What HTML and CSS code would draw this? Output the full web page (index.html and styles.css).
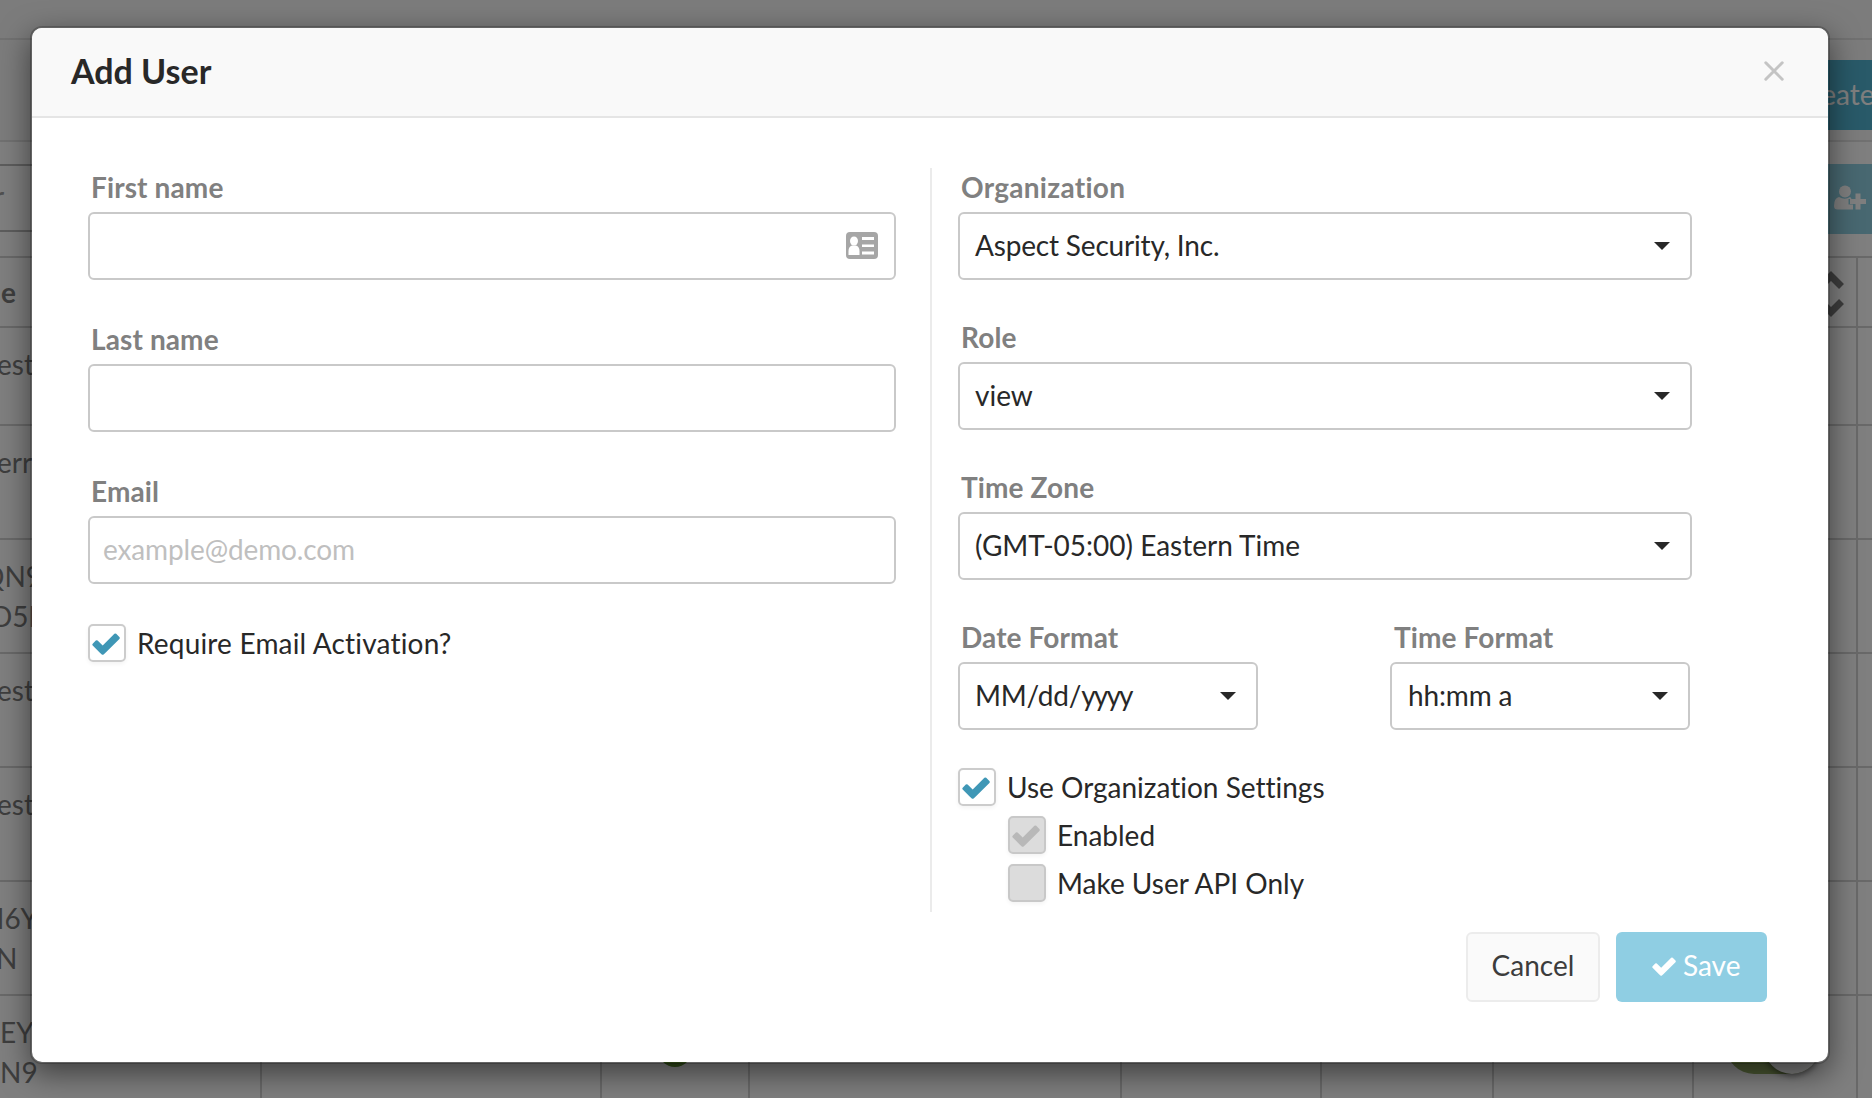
FILE: index.html
```html
<!DOCTYPE html>
<html lang="en">
<head>
<meta charset="utf-8">
<title>Add User</title>
<link rel="stylesheet" href="styles.css">
</head>
<body>
<svg class="defs" width="0" height="0">
  <symbol id="check" viewBox="0 0 28 22"><path d="M27.4 5.9 13.5 19.8 11.6 21.5Q10.7 22.1 9.8 21.5L7.9 19.8.7 12.5Q-.1 11.6.7 10.7L3.8 7.6Q4.7 6.8 5.6 7.6L10.7 12.6 22.4.8Q23.3 0 24.2.8L27.4 4Q28.2 4.9 27.4 5.9Z" fill="currentColor"/></symbol>
</svg>
<div class="page">
  <div class="topbar"></div>
  <div class="toolbar"><button class="create">Create</button></div>
  <div class="searchbar">
    <div class="search">r</div>
    <button class="add-user"><svg width="34" height="26" viewBox="0 0 34 26"><circle cx="12" cy="6.5" r="6"/><path d="M6 12Q1 13 1 21Q1 24.500 4.500 24.500H20V19.500H15.500V14H18.500Q18 12.300 17 12Q12 15.500 6 12Z"/><path d="M22.500 8.500h5v5.500h5.500v5h-5.500v5.500h-5v-5.500h-5.500v-5h5.500z"/></svg></button>
  </div>
  <div class="table">
    <div class="row head"><div class="name">e</div><i></i><i></i><i></i><i></i><i></i><i></i><i class="sort"><svg width="28" height="46" viewBox="0 0 28 46"><path d="M3.500 15.500 14 5 24.500 15.500M3.500 30.500 14 41 24.500 30.500" fill="none" stroke="currentColor" stroke-width="7"/></svg></i></div>
    <div class="row short"><div class="name n1">est</div><i></i><i></i><i></i><i></i><i></i><i></i><i></i></div>
    <div class="row"><div class="name n1">err</div><i></i><i></i><i></i><i></i><i></i><i></i><i></i></div>
    <div class="row"><div class="name"><span class="n2">QN9</span><span class="n3">D5H</span></div><i></i><i></i><i></i><i></i><i></i><i></i><i></i></div>
    <div class="row"><div class="name n1">est</div><i></i><i></i><i></i><i></i><i></i><i></i><i></i></div>
    <div class="row"><div class="name n1">est</div><i></i><i></i><i></i><i></i><i></i><i></i><i></i></div>
    <div class="row"><div class="name"><span class="n4">H6Y</span><span class="n5">N</span></div><i></i><i></i><i></i><i></i><i></i><i></i><i></i></div>
    <div class="row"><div class="name"><span class="n6">EY</span><span class="n7">N9</span></div><i></i><i class="status"><b class="dot"></b></i><i></i><i></i><i></i><i></i><i class="switch-cell"><b class="switch"><b class="knob"></b></b></i></div>
  </div>
</div>
<div class="backdrop">
  <div class="modal">
    <header class="modal-head">
      <h1>Add User</h1>
      <svg class="close" width="20" height="20" viewBox="0 0 20 20"><path d="M1.800 1.800 18.200 18.200M18.200 1.800 1.800 18.200" stroke="currentColor" stroke-width="3" stroke-linecap="round"/></svg>
    </header>
    <div class="columns">
      <div class="left">
        <div class="field"><label>First name</label><div class="box"><svg class="card" width="32" height="27" viewBox="0 0 32 27"><rect width="32" height="27" rx="4" fill="#a6a6a6"/><g fill="#fff"><ellipse cx="8" cy="9" rx="4" ry="4.500"/><path d="M2.500 23v-4q0-4.500 3.500-5.500h4q3.500 1 3.500 5.500v4z"/><path d="M16 5h12v3h-12zM16 12.500h12v2.500h-12zM16 19.500h12v3h-12z"/></g></svg></div></div>
        <div class="field"><label>Last name</label><div class="box"></div></div>
        <div class="field"><label>Email</label><div class="box hint">example@demo.com</div></div>
        <div class="option wide"><span class="tick"><svg width="28" height="22"><use href="#check"/></svg></span>Require Email Activation?</div>
      </div>
      <div class="right">
        <div class="field"><label class="org-label">Organization</label><div class="box select org">Aspect Security, Inc.</div></div>
        <div class="field"><label>Role</label><div class="box select">view</div></div>
        <div class="field"><label>Time Zone</label><div class="box select">(GMT-05:00) Eastern Time</div></div>
        <div class="pair">
          <div class="field"><label>Date Format</label><div class="box select date">MM/dd/<span class="year">yyyy</span></div></div>
          <div class="field time"><label>Time Format</label><div class="box select">hh:mm a</div></div>
        </div>
        <div class="option"><span class="tick"><svg width="28" height="22"><use href="#check"/></svg></span>Use Organization Settings</div>
        <div class="option sub"><span class="tick off"><svg width="28" height="22"><use href="#check"/></svg></span>Enabled</div>
        <div class="option sub"><span class="tick off"></span>Make User API Only</div>
      </div>
    </div>
    <footer class="actions">
      <button class="cancel">Cancel</button>
      <button class="save"><svg width="24" height="19"><use href="#check"/></svg>Save</button>
    </footer>
  </div>
</div>
</body>
</html>
```

FILE: styles.css
```css
* { box-sizing: border-box; }
body { margin: 0; height: 1098px; overflow: hidden; position: relative; font: 28px/40px Lato, sans-serif; font-variant-ligatures: none; color: #282828; background: #fff; }
button { font: inherit; font-variant-ligatures: none; padding: 0; border: 0; }
.defs { position: absolute; }

.page { height: 1098px; overflow: hidden; color: #7c7c7c; }
.topbar { height: 40px; background: #f9f9f9; border-bottom: 2px solid #e2e2e2; }
.toolbar { height: 102px; padding-top: 20px; background: #f9f9f9; border-bottom: 2px solid #e2e2e2; }
.create { display: block; width: 240px; height: 70px; margin-left: 1780px; padding: 0 0 3px 13px; text-align: left; color: #fff; background: #52b4d2; }
.searchbar { display: flex; justify-content: space-between; height: 114px; padding-top: 22px; }
.search { width: 600px; height: 68px; padding: 10px 0 0; border: 2px solid #bbb; border-left: 0; text-indent: -6px; color: #a0a0a0; }
.add-user { width: 92px; height: 70px; padding: 0 0 2px 53px; background: #90d0e3; text-align: left; }
.add-user svg { display: block; fill: #fff; }
.table { border-top: 2px solid #d2d2d2; }
.row { display: grid; grid-template-columns: 262px 340px 148px 372px 200px 172px 200px 164px; height: 114px; border-bottom: 2px solid #d2d2d2; }
.row > * { border-right: 2px solid #d2d2d2; }
.row.head { height: 70px; font-weight: 700; }
.row.short { height: 98px; }
.name { padding-top: 16px; }
.name span { display: block; }
.head .name { padding-top: 14px; text-indent: 1px; }
.n1 { text-indent: -3px; }
.n2 { text-indent: -18px; }
.n3 { text-indent: -9px; }
.n4 { text-indent: -17px; }
.n5 { text-indent: -4px; }
.n6, .n7 { text-indent: 0; }
.sort { display: flex; justify-content: flex-end; padding: 13px 11px 0 0; }
.status { padding: 37px 0 0 56px; }
.dot { display: block; width: 34px; height: 34px; border-radius: 50%; background: #649632; }
.switch-cell { padding: 22px 0 0 32px; }
.switch { display: block; width: 94px; height: 56px; border-radius: 28px; background: #96b066; }
.knob { display: block; width: 56px; height: 56px; margin-left: 38px; border-radius: 50%; background: #fff; box-shadow: 0 2px 6px rgba(0,0,0,.5); }

.backdrop { position: absolute; inset: 0; padding: 26px 42px 34px 30px; background: rgba(0,0,0,.5); }
.modal { height: 1038px; border: 2px solid rgba(0,0,0,.2); border-radius: 12px; background: #fff; background-clip: padding-box; box-shadow: 0 10px 30px rgba(0,0,0,.5); }
.modal-head { display: flex; justify-content: space-between; align-items: flex-start; height: 90px; padding: 21px 44px 0 39px; background: #f9f9f9; border-bottom: 2px solid #e5e5e5; border-radius: 10px 10px 0 0; }
h1 { margin: 0; font-size: 34px; line-height: 44px; font-weight: 700; }
.close { display: block; margin-top: 12px; color: #c4c4c4; }
.columns { display: flex; height: 794px; padding: 50px 56px 0; }
.left { width: 844px; height: 744px; padding-right: 34px; border-right: 2px solid #ebebeb; }
.right { width: 760px; padding-left: 26px; }
.field label { display: block; height: 44px; padding-left: 3px; font-weight: 700; color: #808080; line-height: 38px; letter-spacing: .12px; }
.field .org-label { letter-spacing: .28px; }
.box { height: 68px; padding: 0 14px; border: 2px solid #c9c9c9; border-radius: 6px; line-height: 62px; }
.left .field { height: 152px; }
.right .field { height: 150px; }
.hint { padding-left: 13px; color: #bfbfbf; letter-spacing: -.13px; }
.card { display: block; margin: 18px 2px 0 auto; }
.select { display: flex; padding: 0 20px 0 15px; }
.select::after { content: ""; margin: 28px 0 0 auto; height: 0; border: 8px solid transparent; border-top-color: #282828; border-bottom: 0; }
.org { letter-spacing: -.18px; }
.date { letter-spacing: -.2px; }
.year { letter-spacing: -1.8px; }
.pair { display: flex; gap: 132px; width: 732px; }
.pair .field { width: 300px; }
.time label { padding-left: 4px; }
.time .select { padding-left: 16px; letter-spacing: -.15px; }
.option { display: flex; align-items: flex-start; height: 48px; gap: 11px; line-height: 38px; }
.wide { letter-spacing: .18px; }
.sub { padding-left: 50px; }
.tick { flex: none; width: 38px; height: 38px; padding: 7px 2px; border: 2px solid #ccc; border-radius: 5px; color: #3f97b6; box-shadow: 0 2px 4px rgba(0,0,0,.05); }
.tick svg { display: block; }
.off { color: #b8b8b8; background: #dcdcdc; border-color: #c8c8c8; }
.actions { display: flex; justify-content: flex-end; gap: 16px; padding: 20px 61px 0; }
.cancel { width: 134px; height: 70px; padding-bottom: 4px; background: #fafafa; border: 2px solid #ececec; border-radius: 6px; color: #3c3c3c; }
.save { display: flex; width: 151px; height: 70px; padding: 0 0 0 36px; gap: 7px; background: #8fcee3; border-radius: 6px; color: #fff; line-height: 66px; }
.save svg { display: block; margin-top: 25px; }
```
